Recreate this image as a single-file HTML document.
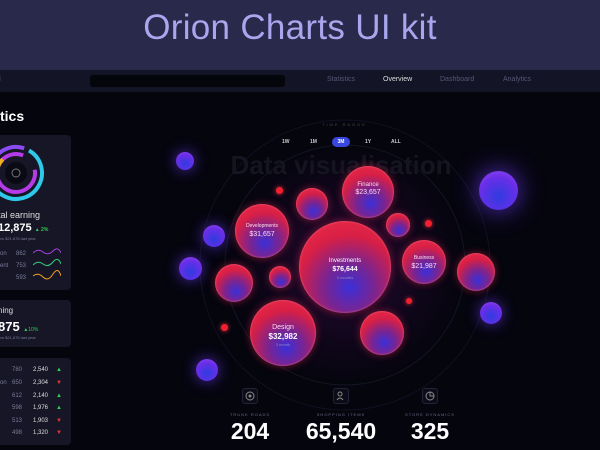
<!DOCTYPE html>
<html><head><meta charset="utf-8"><style>
*{margin:0;padding:0;box-sizing:border-box}
body{width:600px;height:450px;overflow:hidden;background:#05050e;font-family:"Liberation Sans",sans-serif;position:relative;color:#fff}
.hdr{position:absolute;left:0;top:0;width:600px;height:70px;background:#29294b;text-align:center;padding-right:20px}
.hdr h1{font-weight:400;font-size:35px;color:#a9a6ee;line-height:56px;letter-spacing:0.3px}
.nav{position:absolute;left:0;top:70px;width:600px;height:22px;background:#141427}
.search{position:absolute;left:90px;top:75px;width:195px;height:12px;background:#05050c;border-radius:3px}
.nav span{position:absolute;top:6px;font-size:7px;color:#565675}
.a{position:absolute;border-radius:50%}
.r{background:radial-gradient(circle at 55% 72%,#3b2fd8 0%,#7a2490 30%,#d81f45 62%,#f0304a 100%);box-shadow:0 0 8px rgba(240,40,80,.5),inset 0 0 2px rgba(255,120,140,.8)}
.p{background:radial-gradient(circle at 50% 65%,#2f3be0 0%,#6a2ee8 60%,#9a4cf0 100%);box-shadow:0 0 14px rgba(110,60,255,.7)}
.d{background:#f0202f;box-shadow:0 0 5px #f03040}
.lbl{position:absolute;text-align:center;color:#fff}
.card{position:absolute;left:0;width:71px;background:#161627;border-radius:0 4px 4px 0}
.t{position:absolute;font-size:6px;color:#7a7a98}
.stat{position:absolute;text-align:center;width:100px}
.stat .ic{width:16px;height:16px;border:1px solid #22223a;border-radius:3px;margin:0 auto;background:#0c0c18;position:relative}
.stat .lb{font-size:4px;color:#6a6a88;letter-spacing:1px;margin-top:8px}
.stat .n{font-size:23px;font-weight:700;margin-top:1px}
</style></head><body>
<div class="hdr"><h1>Orion Charts UI kit</h1></div>
<div class="nav">
<span style="left:-1px;color:#ccc">l</span>
<span style="left:327px">Statistics</span>
<span style="left:383px;color:#ddd">Overview</span>
<span style="left:440px">Dashboard</span>
<span style="left:503px">Analytics</span>
</div>
<div class="search"></div>
<div style="position:absolute;left:0;top:108px;font-size:14px;font-weight:700">tics</div>

<div class="card" style="top:135px;height:155px">
 <svg width="71" height="70" style="position:absolute;left:-20px;top:8px" viewBox="0 0 71 70">
  <circle cx="36" cy="30" r="26" fill="none" stroke="#2ec8e8" stroke-width="4" stroke-dasharray="120 200" transform="rotate(-60 36 30)"/>
  <circle cx="36" cy="30" r="26" fill="none" stroke="#8a4cf0" stroke-width="4" stroke-dasharray="40 200" transform="rotate(200 36 30)"/>
  <circle cx="36" cy="30" r="19" fill="none" stroke="#b53ae8" stroke-width="4" stroke-dasharray="100 200" transform="rotate(-10 36 30)"/>
  <circle cx="36" cy="30" r="19" fill="none" stroke="#f0b020" stroke-width="4" stroke-dasharray="12 200" transform="rotate(190 36 30)"/>
  <circle cx="36" cy="30" r="11" fill="#0a0a14"/>
  <circle cx="36" cy="30" r="4" fill="none" stroke="#777" stroke-width="1"/>
 </svg>
 <div style="position:absolute;left:-2px;top:75px;font-size:9px;color:#ddd">tal earning</div>
 <div style="position:absolute;left:-2px;top:87px;font-size:11px;font-weight:700">12,875 <span style="font-size:5px;color:#3c5">▲ 2%</span></div>
 <div class="t" style="left:0;top:101px;font-size:4px">vs $21,876 last year</div>
 <div class="t" style="left:0;top:116px">on</div><div class="t" style="left:16px;top:116px">862</div>
 <div class="t" style="left:0;top:128px">ent</div><div class="t" style="left:16px;top:128px">753</div>
 <div class="t" style="left:16px;top:140px">593</div>
 <svg width="28" height="40" style="position:absolute;left:33px;top:113px"><path d="M0 5 Q5 0 10 4 T20 3 T28 5" stroke="#a040e0" fill="none"/><path d="M0 17 Q5 12 10 16 T20 14 T28 16" stroke="#30d080" fill="none"/><path d="M0 28 Q5 24 10 29 T20 26 T28 28" stroke="#f0a020" fill="none"/></svg>
</div>
<div class="card" style="top:300px;height:47px">
 <div style="position:absolute;left:-2px;top:6px;font-size:8px;color:#ddd">ning</div>
 <div style="position:absolute;left:-2px;top:19px;font-size:13px;font-weight:700">875 <span style="font-size:5px;color:#3c5;font-weight:400">▲10%</span></div>
 <div class="t" style="left:0;top:35px;font-size:4px">vs $21,876 last year</div>
</div>
<div class="card" style="top:358px;height:87px">
 <div class="t" style="left:12px;top:9px">780</div><div class="t" style="left:33px;top:9px;color:#ddd">2,540</div><div class="t" style="left:56px;top:9px;color:#3c5">▲</div>
 <div class="t" style="left:0;top:22px">on</div><div class="t" style="left:12px;top:22px">650</div><div class="t" style="left:33px;top:22px;color:#ddd">2,304</div><div class="t" style="left:56px;top:22px;color:#e33">▼</div>
 <div class="t" style="left:12px;top:35px">612</div><div class="t" style="left:33px;top:35px;color:#ddd">2,140</div><div class="t" style="left:56px;top:35px;color:#3c5">▲</div>
 <div class="t" style="left:12px;top:47px">598</div><div class="t" style="left:33px;top:47px;color:#ddd">1,976</div><div class="t" style="left:56px;top:47px;color:#3c5">▲</div>
 <div class="t" style="left:12px;top:60px">513</div><div class="t" style="left:33px;top:60px;color:#ddd">1,903</div><div class="t" style="left:56px;top:60px;color:#e33">▼</div>
 <div class="t" style="left:12px;top:72px">498</div><div class="t" style="left:33px;top:72px;color:#ddd">1,320</div><div class="t" style="left:56px;top:72px;color:#e33">▼</div>
</div>

<div class="a" style="left:215px;top:150px;width:260px;height:230px;background:radial-gradient(circle,rgba(120,20,120,.35) 0%,rgba(60,10,80,.18) 45%,transparent 70%)"></div>
<svg width="600" height="450" style="position:absolute;left:0;top:0">
 <circle cx="345" cy="265" r="145" fill="none" stroke="#111122" stroke-width="1"/>
 <circle cx="345" cy="265" r="120" fill="none" stroke="#141426" stroke-width="1"/>
</svg>
<div style="position:absolute;left:0;width:682px;top:150px;text-align:center;font-size:26px;font-weight:700;color:#151522">Data visualisation</div>
<div style="position:absolute;left:322px;top:122px;font-size:4px;letter-spacing:2px;color:#444">TIME RANGE</div>
<div style="position:absolute;top:139px;font-size:5px;font-weight:700;color:#ccc;left:282px">1W</div>
<div style="position:absolute;top:139px;font-size:5px;font-weight:700;color:#ccc;left:310px">1M</div>
<div style="position:absolute;top:137px;left:332px;width:18px;height:10px;border-radius:5px;background:#3747e0;font-size:5px;font-weight:700;text-align:center;line-height:10px">3M</div>
<div style="position:absolute;top:139px;font-size:5px;font-weight:700;color:#ccc;left:365px">1Y</div>
<div style="position:absolute;top:139px;font-size:5px;font-weight:700;color:#ccc;left:391px">ALL</div>

<div class="a p" style="left:176px;top:152px;width:18px;height:18px"></div>
<div class="a p" style="left:479px;top:171px;width:39px;height:39px;box-shadow:0 0 25px rgba(110,60,255,.8)"></div>
<div class="a p" style="left:203px;top:225px;width:22px;height:22px"></div>
<div class="a p" style="left:179px;top:257px;width:23px;height:23px"></div>
<div class="a p" style="left:480px;top:302px;width:22px;height:22px"></div>
<div class="a p" style="left:196px;top:359px;width:22px;height:22px"></div>
<div class="a r" style="left:299px;top:221px;width:92px;height:92px"></div>
<div class="a r" style="left:342px;top:166px;width:52px;height:52px"></div>
<div class="a r" style="left:235px;top:204px;width:54px;height:54px"></div>
<div class="a r" style="left:250px;top:300px;width:66px;height:66px"></div>
<div class="a r" style="left:402px;top:240px;width:44px;height:44px"></div>
<div class="a r" style="left:215px;top:264px;width:38px;height:38px"></div>
<div class="a r" style="left:269px;top:266px;width:22px;height:22px"></div>
<div class="a r" style="left:296px;top:188px;width:32px;height:32px"></div>
<div class="a r" style="left:386px;top:213px;width:24px;height:24px"></div>
<div class="a r" style="left:360px;top:311px;width:44px;height:44px"></div>
<div class="a r" style="left:457px;top:253px;width:38px;height:38px"></div>
<div class="a d" style="left:276px;top:187px;width:7px;height:7px"></div>
<div class="a d" style="left:425px;top:220px;width:7px;height:7px"></div>
<div class="a d" style="left:406px;top:298px;width:6px;height:6px"></div>
<div class="a d" style="left:221px;top:324px;width:7px;height:7px"></div>

<div class="lbl" style="left:315px;top:258px;width:60px"><div style="font-size:6px">Investments</div><div style="font-size:7px;font-weight:700;margin-top:2px">$76,644</div><div style="font-size:4px;color:#8a8ac0;margin-top:2px">3 months</div></div>
<div class="lbl" style="left:338px;top:182px;width:60px;font-size:6px;color:#fde">Finance<div style="font-size:7px;margin-top:1px">$23,657</div></div>
<div class="lbl" style="left:232px;top:223px;width:60px;font-size:5px;color:#fde">Developments<div style="font-size:7px;margin-top:2px">$31,657</div></div>
<div class="lbl" style="left:394px;top:255px;width:60px;font-size:5px;color:#fde">Business<div style="font-size:7px;margin-top:2px">$21,987</div></div>
<div class="lbl" style="left:253px;top:324px;width:60px;font-size:7px;color:#fde">Design<div style="font-size:8px;font-weight:700;margin-top:1px;color:#fff">$32,982</div><div style="font-size:4px;color:#8a8ac0;margin-top:1px">3 month</div></div>

<div class="stat" style="left:200px;top:388px"><div class="ic"><svg width="14" height="14" style="position:absolute;left:0;top:0"><circle cx="7" cy="7" r="4" fill="none" stroke="#888" stroke-width="1"/><circle cx="7" cy="7" r="1.5" fill="#888"/></svg></div><div class="lb">TRUNK ROADS</div><div class="n">204</div></div>
<div class="stat" style="left:291px;top:388px"><div class="ic"><svg width="14" height="14" style="position:absolute;left:0;top:0"><circle cx="6" cy="5" r="2" fill="none" stroke="#888"/><path d="M3 11 Q6 7 9 11" fill="none" stroke="#888"/></svg></div><div class="lb">SHOPPING ITEMS</div><div class="n">65,540</div></div>
<div class="stat" style="left:380px;top:388px"><div class="ic"><svg width="14" height="14" style="position:absolute;left:0;top:0"><circle cx="7" cy="7" r="4" fill="none" stroke="#888"/><path d="M7 3 V7 H11" fill="none" stroke="#888"/></svg></div><div class="lb">STORE DYNAMICS</div><div class="n">325</div></div>
</body></html>
